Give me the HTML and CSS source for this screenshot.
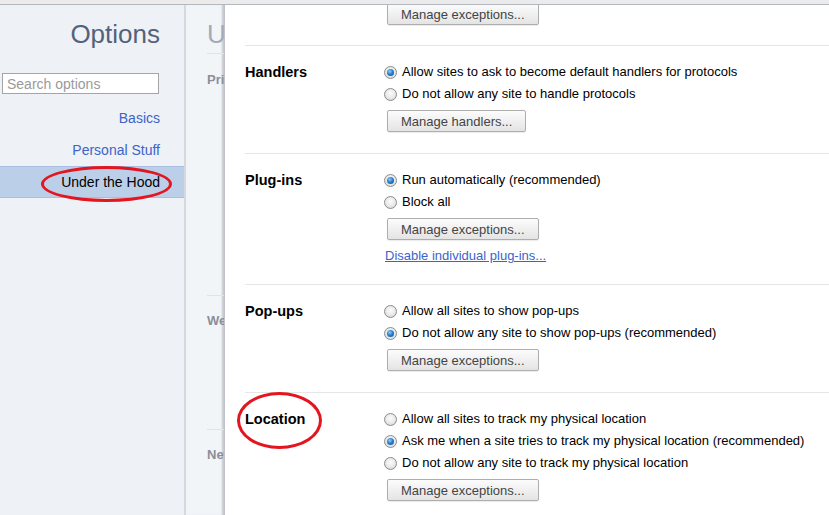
FILE: index.html
```html
<!DOCTYPE html>
<html>
<head>
<meta charset="utf-8">
<title>Options</title>
<link rel="stylesheet" href="styles.css">
</head>
<body>
<div class="topbar"></div>
<div class="main">
	<div class="sidebar">
		<h1 class="title">Options</h1>
		<input class="search" type="text" placeholder="Search options">
		<ul class="nav">
			<li><a href="#">Basics</a></li>
			<li><a href="#">Personal Stuff</a></li>
			<li class="selected">Under the Hood<span class="mark mark-nav"></span></li>
		</ul>
	</div>
	<div class="page">
		<div class="page-inner">
			<h2 class="page-title">Under the Hood</h2>
			<div class="page-sec privacy"><h3>Privacy</h3></div>
			<div class="page-sec web"><h3>Web Content</h3></div>
			<div class="page-sec network"><h3>Network</h3></div>
		</div>
	</div>
	<div class="overlay">
		<div class="sec sec-top">
			<div></div>
			<div class="opts"><button class="btn">Manage exceptions...</button></div>
		</div>
		<div class="sec">
			<h3 class="label">Handlers</h3>
			<div class="opts">
				<div class="opt"><span class="radio on"></span>Allow sites to ask to become default handlers for protocols</div>
				<div class="opt"><span class="radio"></span>Do not allow any site to handle protocols</div>
				<button class="btn">Manage handlers...</button>
			</div>
		</div>
		<div class="sec">
			<h3 class="label">Plug-ins</h3>
			<div class="opts">
				<div class="opt"><span class="radio on"></span>Run automatically (recommended)</div>
				<div class="opt"><span class="radio"></span>Block all</div>
				<button class="btn">Manage exceptions...</button>
				<a class="link" href="#">Disable individual plug-ins...</a>
			</div>
		</div>
		<div class="sec">
			<h3 class="label">Pop-ups</h3>
			<div class="opts">
				<div class="opt"><span class="radio"></span>Allow all sites to show pop-ups</div>
				<div class="opt"><span class="radio on"></span>Do not allow any site to show pop-ups (recommended)</div>
				<button class="btn">Manage exceptions...</button>
			</div>
		</div>
		<div class="sec">
			<h3 class="label">Location<span class="mark mark-loc"></span></h3>
			<div class="opts">
				<div class="opt"><span class="radio"></span>Allow all sites to track my physical location</div>
				<div class="opt"><span class="radio on"></span>Ask me when a site tries to track my physical location (recommended)</div>
				<div class="opt"><span class="radio"></span>Do not allow any site to track my physical location</div>
				<button class="btn">Manage exceptions...</button>
			</div>
		</div>
	</div>
</div>
</body>
</html>
```

FILE: styles.css
```css
*{margin:0; padding:0; box-sizing:border-box;}
body{font-family:"Liberation Sans", Arial, sans-serif; font-size:13px; color:#111; background:#fff; overflow:hidden;}
ul{list-style:none;}

.topbar{height:5px; background:#ebebeb; border-bottom:1px solid #b3b7be;}
.main{display:flex; height:510px; overflow:hidden;}

/* left nav */
.sidebar{width:186px; flex:none; background:#eef1f5; border-right:2px solid #d5d9df;}
.sidebar .title{font-size:26px; font-weight:normal; line-height:30px; color:#53627c; text-align:right; padding-right:24px; margin-top:14px;}
.sidebar .search{display:block; width:157px; height:21px; margin:24px 0 0 2px; border:1px solid #a5a5a5; padding:0 4px; font-family:inherit; font-size:14px; outline:none;}
.sidebar .search::placeholder{color:#9a9a9a;}
.nav{margin-top:8px;}
.nav li{height:32px; line-height:32px; text-align:right; padding-right:24px; font-size:14px;}
.nav a{color:#3d64c9; text-decoration:none;}
.nav .selected{position:relative; background:#bccfe9; border-top:1px solid #a8bee2; border-bottom:1px solid #a8bee2; line-height:30px; color:#000;}

/* page under the overlay */
.page{width:38px; flex:none; background:#f2f5f8; overflow:hidden; box-shadow:inset -3px 0 2px -1px #c4c8ce;}
.page-inner{width:400px; padding:14px 0 0 21px; white-space:nowrap;}
.page-title{font-size:26px; font-weight:normal; line-height:30px; color:#a3abba; padding-bottom:4px; border-bottom:1px solid #e0e3e8;}
.page-sec h3{font-size:13px; line-height:22px; color:#8b8f97;}
.page-sec{border-top:1px solid #e0e3e8;}
.page-sec.privacy{border-top:0; height:241px; padding-top:15px;}
.page-sec.web{height:134px; padding-top:14px;}
.page-sec.network{padding-top:14px;}

/* overlay panel */
.overlay{flex:1; background:#fff; overflow:hidden; padding-left:20px; border-left:1px solid #bfc3c9;}
.sec{display:grid; grid-template-columns:139px 1fr; padding:15px 0 21px; border-top:1px solid #e6e6e6;}
.sec-top{border-top:0; padding:0 0 20px;}
.sec-top .btn{margin-top:-2px;}
.label{font-size:14.5px; line-height:22px; color:#000; position:relative; align-self:start;}
.opts{display:flex; flex-direction:column; align-items:flex-start;}
.opt{height:22px; line-height:22px; display:flex; align-items:center; white-space:nowrap; color:#000;}

.radio{width:13px; height:13px; border-radius:50%; border:1px solid #8b8c8d; margin-right:5px; position:relative;
	background:radial-gradient(circle at 50% 40%, #fdfdfd 0, #e8e8e8 55%, #cfcfcf 100%);}
.radio.on:after{content:""; position:absolute; left:2px; top:2px; width:7px; height:7px; border-radius:50%;
	background:radial-gradient(circle at 40% 35%, #8fd0fa 0, #2b7fd0 45%, #0d4c8f 100%);}

.btn{margin:5px 0 0 3px; height:22px; padding:0 13px; font-family:inherit; font-size:13px; color:#444;
	border:1px solid #aeaeae; border-radius:2px; background:linear-gradient(#fcfcfc, #e4e4e4); box-shadow:0 1px 1px rgba(0,0,0,.08);}
.link{margin:8px 0 -1px 1px; line-height:16px; color:#3a64cc; text-decoration:underline;}

/* red annotation rings */
.mark{position:absolute; border:3px solid #e3161f; border-radius:50%; pointer-events:none;}
.mark-nav{left:41px; top:-1px; width:131px; height:36px;}
.mark-loc{left:-8px; top:-16px; width:85px; height:57px;}
```
